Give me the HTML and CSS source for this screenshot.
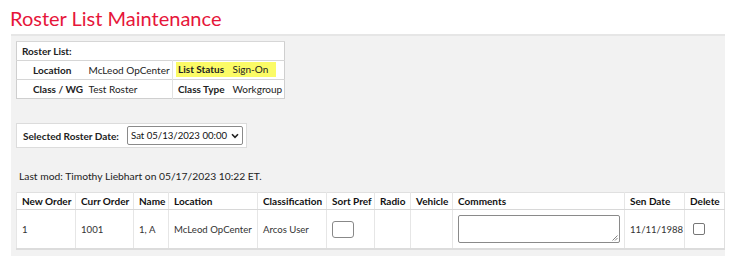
FILE: index.html
```html
<!DOCTYPE html>
<html>
<head>
<meta charset="utf-8">
<link rel="stylesheet" href="styles.css">
</head>
<body>
<h1 class="title">Roster List Maintenance</h1>
<div class="panel">
  <table class="info">
    <colgroup>
      <col class="c-lbl"><col class="c-val"><col class="c-lbl2"><col class="c-val2">
    </colgroup>
    <tr><td class="info-head" colspan="4">Roster List:</td></tr>
    <tr>
      <td class="lbl">Location</td>
      <td class="val">McLeod OpCenter</td>
      <td class="lbl2 hl-l"><div class="hl">List Status</div></td>
      <td class="val2 hl-r"><div class="hl">Sign-On</div></td>
    </tr>
    <tr>
      <td class="lbl">Class / WG</td>
      <td class="val">Test Roster</td>
      <td class="lbl2">Class Type</td>
      <td class="val2">Workgroup</td>
    </tr>
  </table>

  <div class="datebox">
    <span class="date-label">Selected Roster Date:</span>
    <div class="select">
      <span>Sat 05/13/2023 00:00</span>
      <svg class="chev" width="8" height="6" viewBox="0 0 8 6"><path d="M1 1.2 L4 4.3 L7 1.2" fill="none" stroke="#222" stroke-width="1.6"/></svg>
    </div>
  </div>

  <p class="lastmod">Last mod: Timothy Liebhart on 05/17/2023 10:22 ET.</p>

  <table class="grid">
    <colgroup>
      <col style="width:59px"><col style="width:58px"><col style="width:35px"><col style="width:89px">
      <col style="width:69px"><col style="width:48px"><col style="width:36px"><col style="width:42px">
      <col style="width:172px"><col style="width:60px"><col style="width:40px">
    </colgroup>
    <tr class="head">
      <th>New Order</th><th>Curr Order</th><th>Name</th><th>Location</th><th>Classification</th><th>Sort Pref</th><th>Radio</th><th>Vehicle</th><th>Comments</th><th>Sen Date</th><th>Delete</th>
    </tr>
    <tr class="row">
      <td>1</td><td>1001</td><td>1, A</td><td>McLeod OpCenter</td><td>Arcos User</td>
      <td><div class="sortbox"></div></td>
      <td></td><td></td>
      <td><div class="comment"><svg class="grip" width="6" height="6" viewBox="0 0 6 6"><path d="M5.5 0.5 L0.5 5.5 M5.5 3 L3 5.5" stroke="#777" stroke-width="0.9"/></svg></div></td>
      <td>11/11/1988</td>
      <td><div class="check"></div></td>
    </tr>
  </table>
</div>
</body>
</html>
```

FILE: styles.css
```css
html, body {
  margin: 0;
  padding: 0;
  background: #fff;
}
body {
  font-family: Lato, "Noto Sans", sans-serif;
  font-size: 10px;
  color: #222;
}
.title {
  margin: 0;
  padding: 5px 0 0 10px;
  height: 34px;
  box-sizing: border-box;
  font-size: 20px;
  font-weight: 400;
  line-height: 26px;
  color: #e6163a;
}
.panel {
  margin-left: 11px;
  width: 714px;
  height: 222px;
  box-sizing: border-box;
  background: #f2f2f2;
  border-top: 2px solid #e6e6e6;
  padding: 5px 5px 0 5px;
}
.info {
  border-collapse: collapse;
  background: #fff;
  border: 1px solid #cfcfcf;
  width: 268px;
  table-layout: fixed;
}
.c-lbl { width: 72px; }
.c-val { width: 84px; }
.c-lbl2 { width: 60px; }
.c-val2 { width: 52px; }
.info td {
  height: 18px;
  padding: 0;
  border-top: 1px solid #d6d6d6;
  white-space: nowrap;
  line-height: 13px;
}
.info td.info-head {
  font-weight: 700;
  padding-left: 5px;
}
.info .lbl {
  padding-left: 16px;
  font-weight: 700;
}
.info .val {
  padding-left: 0;
  border-right: 1px solid #e2e2e2;
}
.info .lbl2 {
  padding-left: 5px;
  font-weight: 700;
}
.info .val2 {
  padding-left: 0;
}
.info td.hl-l, .info td.hl-r {
  padding-top: 1px;
  padding-bottom: 2px;
  height: 15px;
}
.info td.hl-l {
  padding-left: 3px;
}
.info td.hl-r {
  padding-right: 8px;
}
.hl {
  background: #fbfb66;
  height: 15px;
  line-height: 15px;
}
.hl-l .hl {
  padding-left: 2px;
}
.datebox {
  margin-top: 24px;
  width: 229px;
  height: 23px;
  background: #fff;
  border: 1px solid #dcdcdc;
  display: flex;
  align-items: center;
}
.date-label {
  font-weight: 700;
  margin-left: 6px;
  width: 104px;
  white-space: nowrap;
}
.select {
  width: 116px;
  height: 19px;
  box-sizing: border-box;
  border: 1px solid #8a8a8a;
  border-radius: 2px;
  display: flex;
  align-items: center;
  justify-content: space-between;
  padding: 0 3px 0 3px;
  font-size: 9.6px;
  color: #111;
  white-space: nowrap;
}
.chev {
  display: block;
}
.lastmod {
  margin: 21px 0 0 3px;
  height: 15px;
  line-height: 15px;
  font-size: 10.3px;
}
.grid {
  margin-top: 8px;
  border-collapse: collapse;
  table-layout: fixed;
  width: 708px;
  background: #fff;
  border: 1px solid #e0e0e0;
  border-bottom: 2px solid #dcdcdc;
}
.grid th, .grid td {
  border-left: 1px solid #e6e6e6;
  text-align: left;
  padding: 0 0 0 5px;
  white-space: nowrap;
}
.grid th {
  height: 16px;
  font-weight: 700;
  color: #111;
  border-bottom: 1px solid #d8d8d8;
}
.grid td {
  height: 38px;
  color: #333;
  font-size: 9.6px;
}
.sortbox {
  width: 22px;
  height: 17px;
  box-sizing: border-box;
  border: 1px solid #888;
  border-radius: 3px;
  background: #fff;
}
.comment {
  width: 162px;
  height: 28px;
  box-sizing: border-box;
  border: 1px solid #8a8a8a;
  border-radius: 2px;
  background: #fff;
  position: relative;
}
.grip {
  position: absolute;
  right: 1px;
  bottom: 1px;
}
.check {
  width: 10px;
  height: 10px;
  border: 1px solid #777;
  border-radius: 2px;
  margin-left: 3px;
  background: #fff;
}
```
